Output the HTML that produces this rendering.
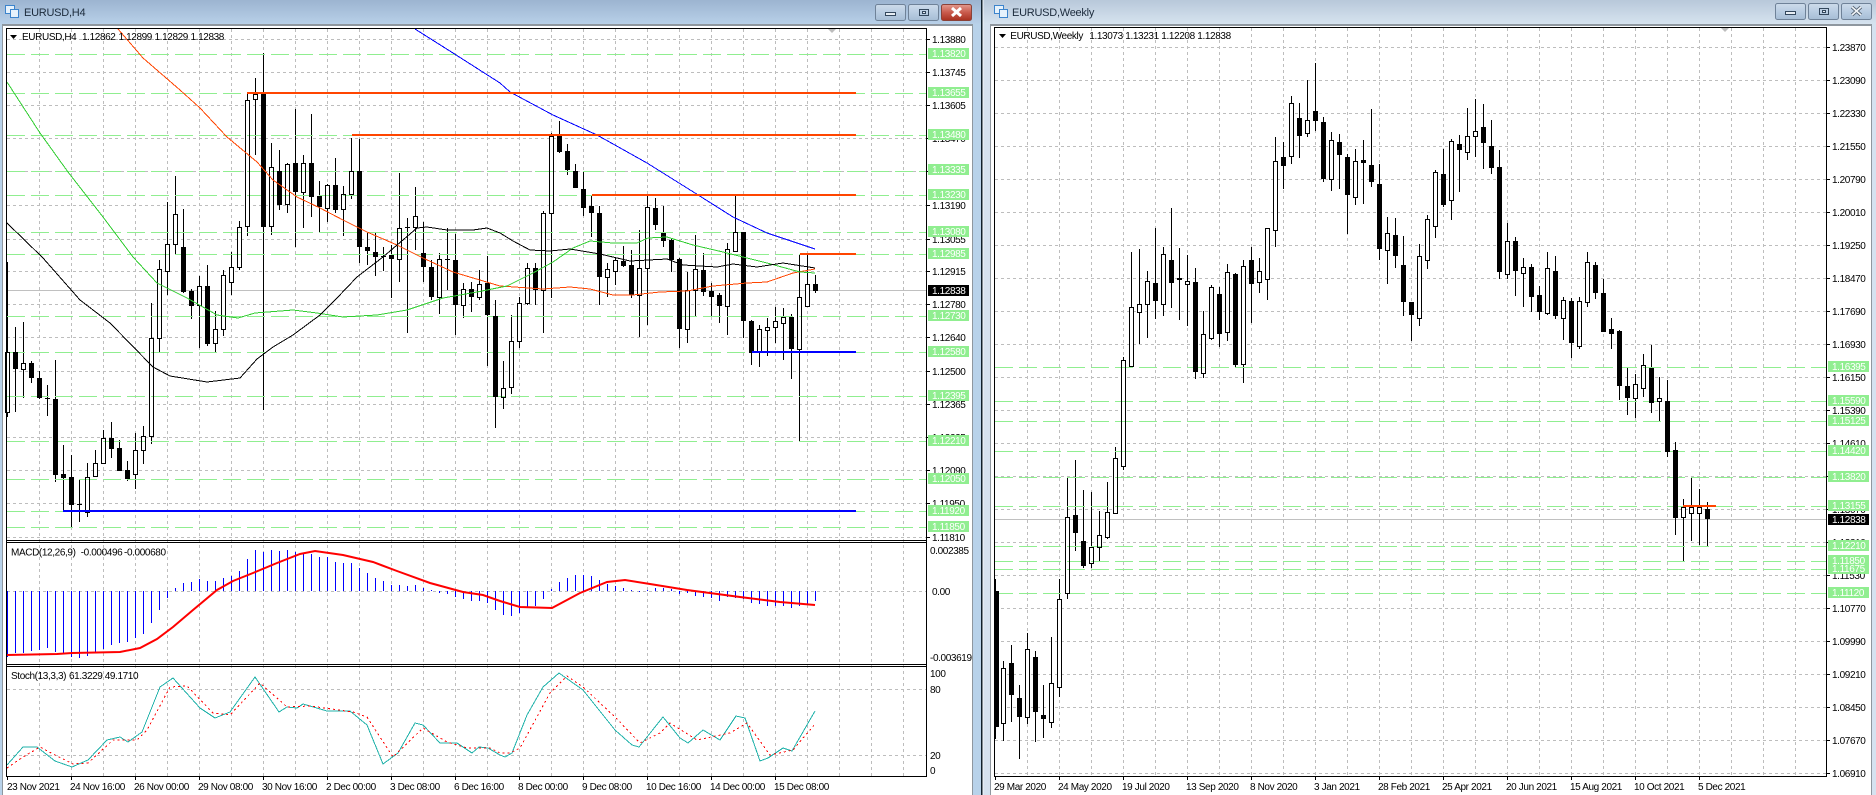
<!DOCTYPE html>
<html><head><meta charset="utf-8"><title>EURUSD</title>
<style>
html,body{margin:0;padding:0;background:#fff;width:1876px;height:795px;overflow:hidden}
svg{display:block}
text{font-family:"Liberation Sans",sans-serif;font-size:10px;letter-spacing:-.38px;fill:#000}
.t{font-size:11px;letter-spacing:-.25px;fill:#1c2b3c}
.w{fill:#fff}
.c{shape-rendering:crispEdges}
.g{fill:none;stroke:#bdbdbd;stroke-width:1;stroke-dasharray:3 3;shape-rendering:crispEdges}
.l{fill:none;stroke:#90ee90;stroke-width:1;stroke-dasharray:18 6;shape-rendering:crispEdges}
.m{fill:none;stroke-width:1;shape-rendering:crispEdges}
</style></head><body>
<svg xmlns="http://www.w3.org/2000/svg" width="1876" height="795" viewBox="0 0 1876 795">
<defs>
<linearGradient id="tl" x1="0" y1="0" x2="0" y2="1"><stop offset="0" stop-color="#9cb4d0"/><stop offset="1" stop-color="#b8d0e8"/></linearGradient>
<linearGradient id="tr" x1="0" y1="0" x2="0" y2="1"><stop offset="0" stop-color="#b8c8da"/><stop offset="1" stop-color="#d6e3ef"/></linearGradient>
<linearGradient id="bb" x1="0" y1="0" x2="0" y2="1"><stop offset="0" stop-color="#cddbea"/><stop offset=".5" stop-color="#b9cde2"/><stop offset="1" stop-color="#a6bdd5"/></linearGradient>
<linearGradient id="bc" x1="0" y1="0" x2="0" y2="1"><stop offset="0" stop-color="#e39a8e"/><stop offset=".5" stop-color="#c95a4c"/><stop offset="1" stop-color="#a8301f"/></linearGradient>
<path id="lw" d="M5.5 352.5h4v60h-4zM21.5 363.5h4v6h-4zM85.5 477.5h4v35h-4zM93.5 463.5h4v13h-4zM101.5 438.5h4v25h-4zM133.5 450.5h4v24h-4zM141.5 436.5h4v14h-4zM149.5 338.5h4v98h-4zM157.5 269.5h4v69h-4zM165.5 244.5h4v27h-4zM173.5 214.5h4v30h-4zM197.5 286.5h4v19h-4zM213.5 329.5h4v14h-4zM221.5 275.5h4v54h-4zM229.5 267.5h4v15h-4zM237.5 227.5h4v40h-4zM245.5 100.5h4v126h-4zM253.5 94.5h4v5h-4zM269.5 167.5h4v59h-4zM285.5 164.5h4v40h-4zM301.5 163.5h4v29h-4zM325.5 185.5h4v23h-4zM341.5 194.5h4v15h-4zM349.5 171.5h4v23h-4zM397.5 228.5h4v31h-4zM413.5 216.5h4v11h-4zM437.5 259.5h4v38h-4zM461.5 289.5h4v16h-4zM477.5 284.5h4v13h-4zM501.5 388.5h4v9h-4zM509.5 341.5h4v46h-4zM517.5 303.5h4v38h-4zM525.5 268.5h4v35h-4zM541.5 213.5h4v77h-4zM549.5 136.5h4v77h-4zM605.5 269.5h4v8h-4zM613.5 260.5h4v11h-4zM637.5 268.5h4v27h-4zM645.5 207.5h4v61h-4zM685.5 290.5h4v39h-4zM693.5 269.5h4v21h-4zM725.5 249.5h4v57h-4zM733.5 232.5h4v19h-4zM757.5 329.5h4v23h-4zM765.5 327.5h4v3h-4zM773.5 321.5h4v6h-4zM781.5 317.5h4v6h-4zM797.5 297.5h4v52h-4zM805.5 284.5h4v22h-4z"/>
<path id="rw" d="M1001.5 668.5h4v55h-4zM1025.5 649.5h4v68h-4zM1049.5 683.5h4v39h-4zM1057.5 599.5h4v88h-4zM1065.5 517.5h4v76h-4zM1089.5 547.5h4v16h-4zM1097.5 535.5h4v12h-4zM1105.5 512.5h4v25h-4zM1113.5 458.5h4v55h-4zM1121.5 360.5h4v106h-4zM1129.5 307.5h4v59h-4zM1137.5 304.5h4v8h-4zM1145.5 281.5h4v23h-4zM1161.5 254.5h4v50h-4zM1185.5 281.5h4v3h-4zM1201.5 334.5h4v39h-4zM1209.5 287.5h4v51h-4zM1225.5 272.5h4v60h-4zM1241.5 266.5h4v98h-4zM1257.5 271.5h4v11h-4zM1265.5 228.5h4v51h-4zM1273.5 161.5h4v69h-4zM1289.5 103.5h4v53h-4zM1305.5 120.5h4v13h-4zM1329.5 140.5h4v39h-4zM1353.5 161.5h4v36h-4zM1385.5 233.5h4v17h-4zM1417.5 256.5h4v62h-4zM1425.5 219.5h4v41h-4zM1433.5 172.5h4v54h-4zM1449.5 141.5h4v59h-4zM1465.5 136.5h4v16h-4zM1473.5 131.5h4v5h-4zM1505.5 241.5h4v33h-4zM1521.5 267.5h4v6h-4zM1545.5 268.5h4v45h-4zM1561.5 300.5h4v18h-4zM1577.5 301.5h4v45h-4zM1585.5 262.5h4v40h-4zM1633.5 384.5h4v14h-4zM1641.5 365.5h4v23h-4zM1657.5 398.5h4v3h-4zM1681.5 507.5h4v10h-4zM1689.5 507.5h4v6h-4zM1697.5 507.5h4v6h-4z"/>
</defs>

<!-- window chrome -->
<rect x="0" y="0" width="982" height="795" fill="#b8d2ea"/>
<rect x="982" y="0" width="894" height="795" fill="#d5e2f0"/>
<rect x="0" y="0" width="982" height="24" fill="url(#tl)"/>
<rect x="983" y="0" width="893" height="24" fill="url(#tr)"/>
<rect x="981" y="0" width="1.5" height="795" fill="#10202c"/>
<rect x="982.5" y="0" width="1" height="795" fill="#f2f6fa"/>
<rect x="2" y="24" width="971" height="771" fill="#8f979f"/>
<rect x="3" y="26" width="969" height="769" fill="#fff"/>
<rect x="990" y="24" width="882" height="771" fill="#8f979f"/>
<rect x="991" y="26" width="880" height="769" fill="#fff"/>

<!-- title icons -->
<g fill="#e6f2fc" stroke="#3c84cc" stroke-width="1" class="c">
<rect x="5.5" y="5.5" width="9" height="8"/><rect x="10.5" y="9.5" width="8" height="8"/>
<rect x="994.5" y="5.5" width="9" height="8"/><rect x="999.5" y="9.5" width="8" height="8"/>
</g>
<text class="t" x="24" y="16">EURUSD,H4</text>
<text class="t" x="1012" y="16">EURUSD,Weekly</text>

<!-- buttons -->
<g stroke="#6f8298" stroke-width="1">
<rect x="875.5" y="4.5" width="30" height="16" rx="2" fill="url(#bb)"/>
<rect x="908.5" y="4.5" width="30" height="16" rx="2" fill="url(#bb)"/>
<rect x="941.5" y="4.5" width="30" height="16" rx="2" fill="url(#bc)" stroke="#8a4238"/>
<rect x="1775.5" y="3.5" width="30" height="16" rx="2" fill="url(#bb)"/>
<rect x="1808.5" y="3.5" width="30" height="16" rx="2" fill="url(#bb)"/>
<rect x="1841.5" y="3.5" width="30" height="16" rx="2" fill="url(#bb)"/>
</g>
<g fill="#e8eef4" stroke="#33475c" stroke-width="1" class="c">
<rect x="885.5" y="12.5" width="10" height="3"/><rect x="919.5" y="9.5" width="9" height="6" fill="none"/><rect x="922.5" y="11.5" width="3" height="2"/>
<rect x="1785.5" y="11.5" width="10" height="3"/><rect x="1819.5" y="8.5" width="9" height="6" fill="none"/><rect x="1822.5" y="10.5" width="3" height="2"/>
</g>
<path d="M952 8l9 8M961 8l-9 8" stroke="#fff" stroke-width="3"/>
<path d="M1852 7l9 8M1861 7l-9 8" stroke="#52606f" stroke-width="3.4"/>
<path d="M1852 7l9 8M1861 7l-9 8" stroke="#f0f4f8" stroke-width="1.6"/>

<!-- LEFT grid -->
<path class="g" d="M39.5 29V776M71.5 29V776M103.5 29V776M135.5 29V776M167.5 29V776M199.5 29V776M231.5 29V776M263.5 29V776M295.5 29V776M327.5 29V776M359.5 29V776M391.5 29V776M423.5 29V776M455.5 29V776M487.5 29V776M519.5 29V776M551.5 29V776M583.5 29V776M615.5 29V776M647.5 29V776M679.5 29V776M711.5 29V776M743.5 29V776M775.5 29V776M807.5 29V776M839.5 29V776M871.5 29V776M903.5 29V776"/>
<path class="g" d="M7 39.5H926M7 72.5H926M7 105.5H926M7 138.5H926M7 171.5H926M7 205.5H926M7 239.5H926M7 271.5H926M7 304.5H926M7 337.5H926M7 371.5H926M7 404.5H926M7 437.5H926M7 470.5H926M7 503.5H926M7 537.5H926M7 591.5H926M7 689.5H926M7 755.5H926"/>
<path d="M7 290.5H926" stroke="#c0c0c0" class="c"/>

<!-- LEFT wicks -->
<path class="c" stroke="#000" stroke-width="1" fill="none" d="M7.5 262V417M15.5 327V412M23.5 322V398M31.5 361V383M39.5 371V399M47.5 385V416M55.5 360V482M63.5 445V512M71.5 455V527M79.5 480V522M87.5 463V517M95.5 450V477M103.5 430V464M111.5 422V458M119.5 440V471M127.5 461V481M135.5 433V489M143.5 426V464M151.5 303V444M159.5 260V353M167.5 202V295M175.5 176V255M183.5 209V293M191.5 289V319M199.5 276V348M207.5 265V346M215.5 311V353M223.5 270V336M231.5 252V295M239.5 221V270M247.5 93V236M255.5 78V155M263.5 53V410M271.5 143V235M279.5 150V210M287.5 163V213M295.5 109V247M303.5 155V228M311.5 114V217M319.5 181V232M327.5 184V222M335.5 158V213M343.5 186V236M351.5 138V199M359.5 139V263M367.5 232V265M375.5 232V276M383.5 247V271M391.5 245V298M399.5 173V282M407.5 218V333M415.5 187V250M423.5 222V282M431.5 260V300M439.5 253V314M447.5 228V290M455.5 234V335M463.5 283V318M471.5 282V312M479.5 270V300M487.5 256V366M495.5 300V428M503.5 361V409M511.5 315V394M519.5 297V348M527.5 263V305M535.5 263V305M543.5 211V333M551.5 133V298M559.5 121V153M567.5 144V175M575.5 164V188M583.5 171V216M591.5 196V237M599.5 206V305M607.5 263V297M615.5 257V285M623.5 246V267M631.5 250V298M639.5 230V337M647.5 196V325M655.5 198V230M663.5 206V247M671.5 238V272M679.5 258V348M687.5 272V343M695.5 235V317M703.5 253V296M711.5 283V316M719.5 293V323M727.5 243V335M735.5 196V252M743.5 232V338M751.5 320V365M759.5 325V367M767.5 318V356M775.5 307V343M783.5 308V360M791.5 314V379M799.5 254V441M807.5 254V307M815.5 275V293"/>
<use href="#lw" fill="#fff"/>
<path class="l" d="M7 54.5H926M7 93.5H926M7 135.5H926M7 171.5H926M7 195.5H926M7 232.5H926M7 254.5H926M7 316.5H926M7 352.5H926M7 396.5H926M7 441.5H926M7 479.5H926M7 511.5H926M7 527.5H926"/>
<!-- LEFT black bodies -->
<path class="c" stroke="#000" stroke-width="5" fill="none" d="M15.5 352V369M31.5 363V378M39.5 378V398M47.5 398V399M55.5 399V475M63.5 474V478M71.5 477V505M79.5 504V505M111.5 438V449M119.5 448V471M127.5 470V479M183.5 247V292M191.5 291V306M207.5 286V344M263.5 93V227M279.5 171V205M295.5 163V192M311.5 163V197M319.5 196V207M335.5 185V210M359.5 171V247M367.5 247V251M375.5 252V257M383.5 256V257M391.5 255V259M407.5 227V228M423.5 253V267M431.5 267V297M447.5 259V260M455.5 260V305M471.5 289V297M487.5 283V315M495.5 316V397M535.5 268V290M559.5 136V152M567.5 151V170M575.5 171V188M583.5 189V208M591.5 206V213M599.5 213V277M623.5 261V266M631.5 265V295M655.5 208V225M663.5 233V241M671.5 240V260M679.5 259V329M703.5 270V292M711.5 291V297M719.5 295V306M743.5 232V321M751.5 321V353M791.5 317V349M815.5 284V291"/>
<use href="#lw" fill="none" stroke="#000" stroke-width="1" class="c"/>

<!-- LEFT MAs -->
<polyline class="m" stroke="#0000ff" points="415,29 453,53 500,83 510,92 553,115 597,135 647,163 695,193 733,217 767,233 815,249"/>
<polyline class="m" stroke="#ff4500" points="118,29 143,58 180,90 200,108 227,137 257,162 273,180 297,197 320,208 343,220 367,232 397,245 423,258 453,272 500,286 543,289 570,287 590,289 613,295 633,295 660,292 687,291 713,286 747,283 767,282 793,273 815,269"/>
<polyline class="m" stroke="#32cd32" points="7,82 40,133 68,172 103,217 133,257 157,283 187,298 217,315 238,318 255,313 293,310 317,313 343,317 377,315 407,310 443,298 477,292 507,286 533,273 553,262 573,248 590,241 613,243 637,243 648,238 667,237 693,245 723,252 767,263 800,272 815,273"/>
<polyline class="m" stroke="#000" points="7,223 43,258 80,300 110,323 153,367 170,376 207,382 240,378 257,359 273,347 293,335 320,315 337,298 357,277 383,257 417,228 427,227 447,230 473,230 487,228 500,233 513,241 530,250 550,251 570,249 600,254 630,261 667,259 683,265 717,267 733,264 757,267 783,263 815,268"/>

<!-- LEFT trend lines -->
<g class="c" fill="#ff4500"><rect x="247" y="92" width="609" height="2"/><rect x="352" y="134" width="504" height="2"/><rect x="592" y="194" width="264" height="2"/><rect x="800" y="253" width="56" height="2"/></g>
<g class="c" fill="#0000ff"><rect x="63" y="510" width="793" height="2"/><rect x="752" y="351" width="104" height="2"/></g>

<!-- MACD hist -->
<path class="c" stroke="#0000ff" fill="none" d="M7.5 591V657M15.5 591V653M23.5 591V653M31.5 591V651M39.5 591V650M47.5 591V648M55.5 591V652M63.5 591V653M71.5 591V657M79.5 591V658M87.5 591V656M95.5 591V652M103.5 591V649M111.5 591V645M119.5 591V643M127.5 591V642M135.5 591V638M143.5 591V634M151.5 591V623M159.5 591V610M167.5 591V598M175.5 591V588M183.5 591V583M191.5 591V582M199.5 591V579M207.5 591V581M215.5 591V581M223.5 591V578M231.5 591V576M239.5 591V571M247.5 591V559M255.5 591V550M263.5 591V552M271.5 591V550M279.5 591V551M287.5 591V550M295.5 591V552M303.5 591V553M311.5 591V554M319.5 591V557M327.5 591V557M335.5 591V562M343.5 591V563M351.5 591V563M359.5 591V568M367.5 591V573M375.5 591V578M383.5 591V581M391.5 591V585M399.5 591V585M407.5 591V586M415.5 591V585M423.5 591V588M431.5 591V590M439.5 591V593M447.5 591V594M455.5 591V597M463.5 591V599M471.5 591V601M479.5 591V601M487.5 591V603M495.5 591V610M503.5 591V615M511.5 591V616M519.5 591V613M527.5 591V607M535.5 591V606M543.5 591V599M551.5 591V589M559.5 591V582M567.5 591V578M575.5 591V575M583.5 591V575M591.5 591V576M599.5 591V580M607.5 591V584M615.5 591V586M623.5 591V588M631.5 591V590M639.5 591V592M647.5 591V590M655.5 591V588M663.5 591V588M671.5 591V589M679.5 591V594M687.5 591V593M695.5 591V596M703.5 591V597M711.5 591V598M719.5 591V601M727.5 591V597M735.5 591V598M743.5 591V599M751.5 591V603M759.5 591V604M767.5 591V606M775.5 591V606M783.5 591V606M791.5 591V608M799.5 591V606M807.5 591V605M815.5 591V601"/>
<polyline fill="none" stroke="#ff0000" stroke-width="2" points="7,655 57,654 72,653 120,652 140,648 157,639 173,627 193,610 217,590 233,581 253,573 277,563 300,554 315,551 343,555 373,562 397,571 430,583 463,592 483,595 500,601 520,607 552,608 580,593 607,582 625,580 650,584 687,590 740,597 780,602 815,605"/>

<!-- Stoch -->
<polyline class="m" stroke="#20b2aa" points="7,765 23,747 37,747 55,761 72,767 88,760 107,740 120,737 128,742 142,732 160,687 173,678 200,708 215,718 230,712 255,677 279,712 287,707 297,708 303,704 327,711 350,711 367,725 383,764 398,753 415,723 423,725 440,743 457,743 472,753 479,747 488,748 500,755 505,757 512,753 527,715 543,687 559,673 583,690 615,730 632,745 639,747 663,717 680,738 688,743 703,730 720,740 736,716 745,718 760,761 768,758 783,748 792,751 815,711"/>
<polyline class="m" stroke="#ff0000" stroke-dasharray="2 3" points="7,768 23,757 40,747 55,755 73,764 88,763 113,740 137,740 147,730 170,687 187,686 213,713 230,715 260,683 287,707 310,706 353,712 367,717 393,757 423,728 447,742 467,748 490,748 500,753 510,753 520,748 550,693 567,676 583,687 615,717 640,743 660,733 670,723 697,740 730,733 747,723 770,755 793,750 815,724"/>

<!-- LEFT frame & axis -->
<rect x="927" y="27" width="45" height="768" fill="#fff"/>
<path class="c" stroke="#000" fill="none" d="M6 28.5H926.5V776.5H6.5V28.5M6 540.5H926M6 542.5H926M6 664.5H926M6 666.5H926"/>
<polygon points="828,29 836,29 832,33" fill="#bdbdbd"/>
<path class="c" stroke="#000" fill="none" d="M927 39.5h3M927 72.5h3M927 105.5h3M927 138.5h3M927 171.5h3M927 205.5h3M927 239.5h3M927 271.5h3M927 304.5h3M927 337.5h3M927 371.5h3M927 404.5h3M927 437.5h3M927 470.5h3M927 503.5h3M927 537.5h3M7.5 777v3M71.5 777v3M135.5 777v3M199.5 777v3M263.5 777v3M327.5 777v3M391.5 777v3M455.5 777v3M519.5 777v3M583.5 777v3M647.5 777v3M711.5 777v3M775.5 777v3"/>
<g>
<text x="932" y="43">1.13880</text><text x="932" y="76">1.13745</text><text x="932" y="109">1.13605</text><text x="932" y="142">1.13470</text><text x="932" y="175">1.13335</text><text x="932" y="209">1.13190</text><text x="932" y="243">1.13055</text><text x="932" y="275">1.12915</text><text x="932" y="308">1.12780</text><text x="932" y="341">1.12640</text><text x="932" y="375">1.12500</text><text x="932" y="408">1.12365</text><text x="932" y="441">1.12225</text><text x="932" y="474">1.12090</text><text x="932" y="507">1.11950</text><text x="932" y="541">1.11810</text>
</g>
<g class="c" fill="#90ee90"><rect x="928" y="48" width="41" height="11"/><rect x="928" y="87" width="41" height="11"/><rect x="928" y="129" width="41" height="11"/><rect x="928" y="164" width="41" height="11"/><rect x="928" y="189" width="41" height="11"/><rect x="928" y="226" width="41" height="11"/><rect x="928" y="248" width="41" height="11"/><rect x="928" y="310" width="41" height="11"/><rect x="928" y="346" width="41" height="11"/><rect x="928" y="390" width="41" height="11"/><rect x="928" y="435" width="41" height="11"/><rect x="928" y="473" width="41" height="11"/><rect x="928" y="505" width="41" height="11"/><rect x="928" y="521" width="41" height="11"/></g>
<rect x="928" y="285" width="41" height="11" fill="#000" class="c"/>
<g class="w">
<text class="w" x="932" y="57">1.13820</text><text class="w" x="932" y="96">1.13655</text><text class="w" x="932" y="138">1.13480</text><text class="w" x="932" y="173">1.13335</text><text class="w" x="932" y="198">1.13230</text><text class="w" x="932" y="235">1.13080</text><text class="w" x="932" y="257">1.12985</text><text class="w" x="932" y="294">1.12838</text><text class="w" x="932" y="319">1.12730</text><text class="w" x="932" y="355">1.12580</text><text class="w" x="932" y="399">1.12395</text><text class="w" x="932" y="444">1.12210</text><text class="w" x="932" y="482">1.12050</text><text class="w" x="932" y="514">1.11920</text><text class="w" x="932" y="530">1.11850</text>
</g>
<text x="930" y="554">0.002385</text><text x="932" y="595">0.00</text><text x="930" y="661">-0.003619</text>
<text x="930" y="677">100</text><text x="930" y="693">80</text><text x="930" y="759">20</text><text x="930" y="774">0</text>
<polygon points="10,35 17,35 13.5,39" fill="#000"/>
<text x="22" y="40">EURUSD,H4</text><text x="82" y="40">1.12862</text><text x="118.5" y="40">1.12899</text><text x="154.5" y="40">1.12829</text><text x="190.5" y="40">1.12838</text>
<text x="11" y="555.5">MACD(12,26,9)</text><text x="80.7" y="555.5">-0.000496</text><text x="124" y="555.5">-0.000680</text>
<text x="11" y="679">Stoch(13,3,3)</text><text x="69" y="679">61.3229</text><text x="104.7" y="679">49.1710</text>
<text x="7" y="790">23 Nov 2021</text><text x="70" y="790">24 Nov 16:00</text><text x="134" y="790">26 Nov 00:00</text><text x="198" y="790">29 Nov 08:00</text><text x="262" y="790">30 Nov 16:00</text><text x="326" y="790">2 Dec 00:00</text><text x="390" y="790">3 Dec 08:00</text><text x="454" y="790">6 Dec 16:00</text><text x="518" y="790">8 Dec 00:00</text><text x="582" y="790">9 Dec 08:00</text><text x="646" y="790">10 Dec 16:00</text><text x="710" y="790">14 Dec 00:00</text><text x="774" y="790">15 Dec 08:00</text>

<!-- RIGHT grid -->
<path class="g" d="M1027.5 28V776M1059.5 28V776M1091.5 28V776M1123.5 28V776M1155.5 28V776M1187.5 28V776M1219.5 28V776M1251.5 28V776M1283.5 28V776M1315.5 28V776M1347.5 28V776M1379.5 28V776M1411.5 28V776M1443.5 28V776M1475.5 28V776M1507.5 28V776M1539.5 28V776M1571.5 28V776M1603.5 28V776M1635.5 28V776M1667.5 28V776M1699.5 28V776M1731.5 28V776M1763.5 28V776M1795.5 28V776"/>
<path class="g" d="M995 47.5H1826M995 80.5H1826M995 113.5H1826M995 146.5H1826M995 179.5H1826M995 212.5H1826M995 245.5H1826M995 278.5H1826M995 311.5H1826M995 344.5H1826M995 377.5H1826M995 410.5H1826M995 443.5H1826M995 476.5H1826M995 509.5H1826M995 542.5H1826M995 575.5H1826M995 608.5H1826M995 641.5H1826M995 674.5H1826M995 707.5H1826M995 740.5H1826M995 773.5H1826"/>
<path d="M995 519.5H1826" stroke="#c0c0c0" class="c"/>
<!-- RIGHT wicks -->
<path class="c" stroke="#000" stroke-width="1" fill="none" d="M995.5 579V739M1003.5 661V741M1011.5 645V722M1019.5 685V759M1027.5 633V724M1035.5 651V742M1043.5 685V738M1051.5 637V728M1059.5 579V697M1067.5 478V599M1075.5 460V551M1083.5 490V568M1091.5 492V568M1099.5 511V562M1107.5 482V539M1115.5 447V513M1123.5 357V470M1131.5 252V367M1139.5 249V344M1147.5 271V338M1155.5 228V319M1163.5 247V316M1171.5 208V308M1179.5 248V320M1187.5 255V326M1195.5 268V379M1203.5 311V378M1211.5 285V340M1219.5 287V347M1227.5 264V341M1235.5 273V367M1243.5 260V383M1251.5 247V323M1259.5 258V293M1267.5 228V300M1275.5 137V247M1283.5 142V189M1291.5 96V164M1299.5 103V158M1307.5 80V137M1315.5 63V131M1323.5 117V182M1331.5 132V191M1339.5 134V189M1347.5 154V234M1355.5 149V205M1363.5 140V204M1371.5 109V187M1379.5 164V260M1387.5 217V284M1395.5 218V268M1403.5 236V316M1411.5 302V341M1419.5 244V326M1427.5 215V269M1435.5 170V238M1443.5 149V207M1451.5 139V220M1459.5 135V192M1467.5 108V160M1475.5 99V157M1483.5 104V169M1491.5 120V174M1499.5 150V279M1507.5 223V279M1515.5 237V296M1523.5 258V307M1531.5 264V312M1539.5 286V320M1547.5 252V315M1555.5 256V319M1563.5 297V340M1571.5 298V358M1579.5 297V349M1587.5 252V307M1595.5 262V299M1603.5 279V332M1611.5 318V349M1619.5 330V400M1627.5 368V415M1635.5 374V418M1643.5 354V397M1651.5 345V413M1659.5 377V421M1667.5 380V457M1675.5 442V535M1683.5 499V561M1691.5 478V541M1699.5 489V545M1707.5 502V546"/>
<use href="#rw" fill="#fff"/>
<path class="l" d="M995 367.5H1826M995 401.5H1826M995 421.5H1826M995 451.5H1826M995 477.5H1826M995 506.5H1826M995 546.5H1826M995 561.5H1826M995 569.5H1826M995 593.5H1826"/>
<path class="c" stroke="#000" stroke-width="5" fill="none" d="M996.5 591V727M1011.5 663V695M1019.5 698V717M1035.5 657V712M1043.5 715V719M1075.5 515V533M1083.5 541V566M1155.5 283V301M1171.5 260V283M1179.5 278V280M1195.5 282V372M1219.5 294V334M1235.5 274V365M1251.5 260V284M1283.5 157V166M1299.5 118V136M1315.5 111V121M1323.5 122V179M1339.5 142V155M1347.5 157V195M1363.5 160V163M1371.5 165V182M1379.5 184V249M1395.5 235V256M1403.5 265V302M1411.5 302V315M1443.5 174V205M1459.5 144V150M1483.5 127V143M1491.5 146V168M1499.5 167V272M1515.5 241V271M1531.5 267V297M1539.5 295V312M1555.5 271V316M1571.5 301V343M1595.5 265V293M1603.5 293V332M1611.5 329V334M1619.5 331V386M1627.5 386V398M1651.5 368V403M1667.5 401V452M1675.5 450V518M1707.5 509V519"/>
<use href="#rw" fill="none" stroke="#000" stroke-width="1" class="c"/>
<rect x="1683" y="505" width="33" height="2" fill="#ff4500" class="c"/>

<!-- RIGHT frame & axis -->
<rect x="1827" y="26" width="44" height="769" fill="#fff"/>
<path class="c" stroke="#000" fill="none" d="M994 27.5H1826.5V776.5H994.5V27.5"/>
<polygon points="1721,28 1729,28 1725,32" fill="#bdbdbd"/>
<path class="c" stroke="#000" fill="none" d="M1827 47.5h3M1827 80.5h3M1827 113.5h3M1827 146.5h3M1827 179.5h3M1827 212.5h3M1827 245.5h3M1827 278.5h3M1827 311.5h3M1827 344.5h3M1827 377.5h3M1827 410.5h3M1827 443.5h3M1827 476.5h3M1827 509.5h3M1827 542.5h3M1827 575.5h3M1827 608.5h3M1827 641.5h3M1827 674.5h3M1827 707.5h3M1827 740.5h3M1827 773.5h3M995.5 777v3M1059.5 777v3M1123.5 777v3M1187.5 777v3M1251.5 777v3M1315.5 777v3M1379.5 777v3M1443.5 777v3M1507.5 777v3M1571.5 777v3M1635.5 777v3M1699.5 777v3"/>
<g>
<text x="1832" y="51">1.23870</text><text x="1832" y="84">1.23090</text><text x="1832" y="117">1.22330</text><text x="1832" y="150">1.21550</text><text x="1832" y="183">1.20790</text><text x="1832" y="216">1.20010</text><text x="1832" y="249">1.19250</text><text x="1832" y="282">1.18470</text><text x="1832" y="315">1.17690</text><text x="1832" y="348">1.16930</text><text x="1832" y="381">1.16150</text><text x="1832" y="414">1.15390</text><text x="1832" y="447">1.14610</text><text x="1832" y="480">1.13850</text><text x="1832" y="513">1.13070</text><text x="1832" y="546">1.12310</text><text x="1832" y="579">1.11530</text><text x="1832" y="612">1.10770</text><text x="1832" y="645">1.09990</text><text x="1832" y="678">1.09210</text><text x="1832" y="711">1.08450</text><text x="1832" y="744">1.07670</text><text x="1832" y="777">1.06910</text>
</g>
<g class="c" fill="#90ee90"><rect x="1828" y="361" width="41" height="11"/><rect x="1828" y="395" width="41" height="11"/><rect x="1828" y="415" width="41" height="11"/><rect x="1828" y="445" width="41" height="11"/><rect x="1828" y="471" width="41" height="11"/><rect x="1828" y="500" width="41" height="11"/><rect x="1828" y="540" width="41" height="11"/><rect x="1828" y="555" width="41" height="11"/><rect x="1828" y="563" width="41" height="11"/><rect x="1828" y="587" width="41" height="11"/></g>
<rect x="1828" y="514" width="41" height="11" fill="#000" class="c"/>
<g>
<text class="w" x="1832" y="370">1.16395</text><text class="w" x="1832" y="404">1.15590</text><text class="w" x="1832" y="424">1.15125</text><text class="w" x="1832" y="454">1.14420</text><text class="w" x="1832" y="480">1.13820</text><text class="w" x="1832" y="509">1.13155</text><text class="w" x="1832" y="523">1.12838</text><text class="w" x="1832" y="549">1.12210</text><text class="w" x="1832" y="564">1.11850</text><text class="w" x="1832" y="572">1.11675</text><text class="w" x="1832" y="596">1.11120</text>
</g>
<polygon points="999,34 1006,34 1002.5,38" fill="#000"/>
<text x="1010.3" y="39">EURUSD,Weekly</text><text x="1089.3" y="39">1.13073</text><text x="1125.3" y="39">1.13231</text><text x="1161.3" y="39">1.12208</text><text x="1197.3" y="39">1.12838</text>
<text x="994" y="790">29 Mar 2020</text><text x="1058" y="790">24 May 2020</text><text x="1122" y="790">19 Jul 2020</text><text x="1186" y="790">13 Sep 2020</text><text x="1250" y="790">8 Nov 2020</text><text x="1314" y="790">3 Jan 2021</text><text x="1378" y="790">28 Feb 2021</text><text x="1442" y="790">25 Apr 2021</text><text x="1506" y="790">20 Jun 2021</text><text x="1570" y="790">15 Aug 2021</text><text x="1634" y="790">10 Oct 2021</text><text x="1698" y="790">5 Dec 2021</text>
</svg>
</body></html>
